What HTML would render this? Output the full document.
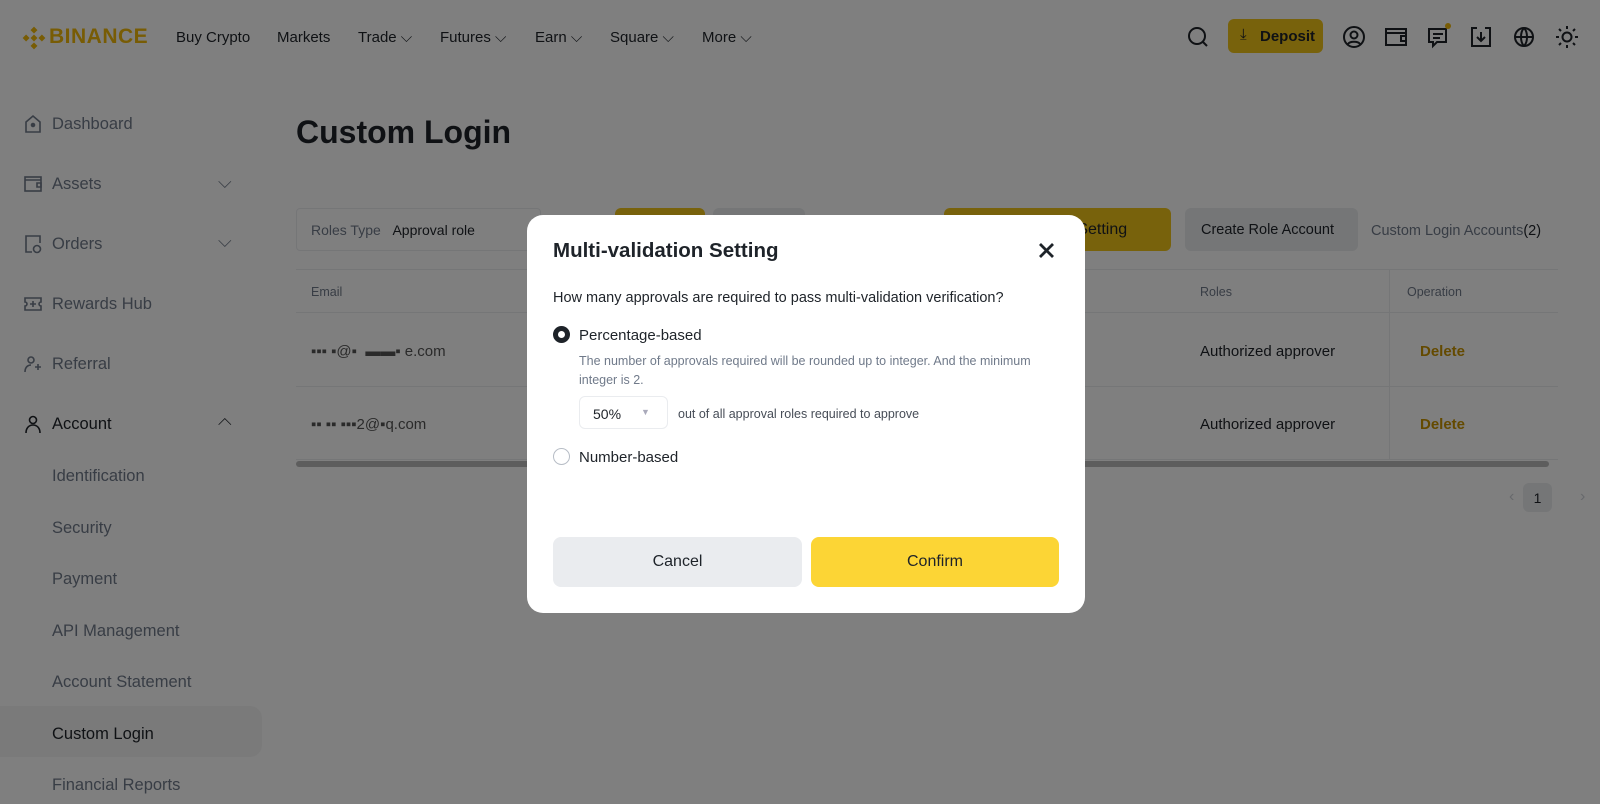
<!DOCTYPE html>
<html><head><meta charset="utf-8">
<style>
*{box-sizing:border-box;margin:0;padding:0}
body{width:1600px;height:804px;overflow:hidden;background:#fff;font-family:"Liberation Sans",sans-serif;color:#1e2329;position:relative}
.a{position:absolute;white-space:nowrap}
.nav{font-size:15px;font-weight:500;color:#1e2329;top:29px}
.side{font-size:16.5px;color:#707a8a;left:52px}
.ico{position:absolute}
.ov{position:absolute;left:0;top:0;width:1600px;height:804px;background:rgba(0,0,0,.5)}
.btn{position:absolute;border-radius:6px}
</style></head><body>
<!-- header -->
<svg class="ico" style="left:21px;top:25px" width="26" height="26" viewBox="0 0 24 24" fill="#f0b90b"><path d="M12 1.5l3.2 3.2-3.2 3.2-3.2-3.2zM12 16.1l3.2 3.2-3.2 3.2-3.2-3.2zM4.7 8.8l3.2 3.2-3.2 3.2L1.5 12zM19.3 8.8l3.2 3.2-3.2 3.2-3.2-3.2zM12 8.8l3.2 3.2-3.2 3.2-3.2-3.2z"/></svg>
<div class="a" style="left:49px;top:25px;font-size:21px;font-weight:700;color:#f0b90b;letter-spacing:.5px">BINANCE</div>
<div class="a nav" style="left:176px">Buy Crypto</div>
<div class="a nav" style="left:277px">Markets</div>
<div class="a nav" style="left:358px">Trade ⌵</div>
<div class="a nav" style="left:440px">Futures ⌵</div>
<div class="a nav" style="left:535px">Earn ⌵</div>
<div class="a nav" style="left:610px">Square ⌵</div>
<div class="a nav" style="left:702px">More ⌵</div>
<svg class="ico" style="left:1186px;top:25px" width="24" height="24" viewBox="0 0 24 24" fill="none" stroke="#1e2329" stroke-width="2"><circle cx="11" cy="11" r="8"/><path d="M17 17l4 4"/></svg>
<div class="btn" style="left:1228px;top:19px;width:95px;height:34px;background:#f0c419;font-size:15px;font-weight:600;padding:9px 0 0 32px">Deposit</div>
<div class="a" style="left:1240px;top:26px;font-size:15px">⤓</div>
<svg class="ico" style="left:1342px;top:25px" width="24" height="24" viewBox="0 0 24 24" fill="none" stroke="#1e2329" stroke-width="2"><circle cx="12" cy="12" r="10"/><circle cx="12" cy="10" r="3.5"/><path d="M6 19c2-3 10-3 12 0"/></svg>
<svg class="ico" style="left:1384px;top:25px" width="24" height="24" viewBox="0 0 24 24" fill="none" stroke="#1e2329" stroke-width="2"><rect x="2" y="4" width="20" height="16"/><path d="M2 8h20M17 11h5v5h-5z"/></svg>
<svg class="ico" style="left:1426px;top:25px" width="24" height="24" viewBox="0 0 24 24" fill="none" stroke="#1e2329" stroke-width="2"><path d="M3 4h17v13H11l-4 4v-4H3z"/><path d="M7 9h10M7 13h7"/></svg>
<div class="a" style="left:1445px;top:23px;width:6px;height:6px;border-radius:50%;background:#f0b90b"></div>
<svg class="ico" style="left:1469px;top:25px" width="24" height="24" viewBox="0 0 24 24" fill="none" stroke="#1e2329" stroke-width="2"><path d="M8 3H3v18h18V3h-5M12 7v9M8 12l4 4 4-4"/></svg>
<svg class="ico" style="left:1512px;top:25px" width="24" height="24" viewBox="0 0 24 24" fill="none" stroke="#1e2329" stroke-width="2"><circle cx="12" cy="12" r="9"/><path d="M3 12h18M12 3c-4 4-4 14 0 18M12 3c4 4 4 14 0 18"/></svg>
<svg class="ico" style="left:1555px;top:25px" width="24" height="24" viewBox="0 0 24 24" fill="none" stroke="#1e2329" stroke-width="2"><circle cx="12" cy="12" r="4.5"/><path d="M12 1v3M12 20v3M1 12h3M20 12h3M4 4l2 2M18 18l2 2M4 20l2-2M18 6l2-2"/></svg>

<!-- sidebar -->
<svg class="ico" style="left:23px;top:114px" width="20" height="20" viewBox="0 0 20 20" fill="none" stroke="#707a8a" stroke-width="1.6"><path d="M3 8l7-6 7 6v10H3z"/><circle cx="10" cy="11" r="1.5" fill="#707a8a"/></svg>
<div class="a side" style="top:115px">Dashboard</div>
<svg class="ico" style="left:23px;top:174px" width="20" height="20" viewBox="0 0 20 20" fill="none" stroke="#707a8a" stroke-width="1.6"><rect x="2" y="3" width="16" height="14"/><path d="M2 6h16M14 9h4v4h-4z"/></svg>
<div class="a side" style="top:175px">Assets</div>
<div class="a" style="left:218px;top:172px;font-size:18px;color:#707a8a">⌵</div>
<svg class="ico" style="left:23px;top:234px" width="20" height="20" viewBox="0 0 20 20" fill="none" stroke="#707a8a" stroke-width="1.6"><path d="M9 18H3V2h14v7"/><circle cx="14" cy="15" r="3.5"/></svg>
<div class="a side" style="top:235px">Orders</div>
<div class="a" style="left:218px;top:231px;font-size:18px;color:#707a8a">⌵</div>
<svg class="ico" style="left:23px;top:294px" width="20" height="20" viewBox="0 0 20 20" fill="none" stroke="#707a8a" stroke-width="1.6"><path d="M2 4h16v4a2 2 0 000 4v4H2v-4a2 2 0 000-4z"/><path d="M10 7v6M7 10h6"/></svg>
<div class="a side" style="top:295px">Rewards Hub</div>
<svg class="ico" style="left:23px;top:354px" width="20" height="20" viewBox="0 0 20 20" fill="none" stroke="#707a8a" stroke-width="1.6"><circle cx="8" cy="6" r="3"/><path d="M2 18c0-5 3-7 6-7M15 10v6M12 13h6"/></svg>
<div class="a side" style="top:355px">Referral</div>
<svg class="ico" style="left:23px;top:414px" width="20" height="20" viewBox="0 0 20 20" fill="none" stroke="#1e2329" stroke-width="1.6"><circle cx="10" cy="6" r="3.5"/><path d="M3 19c0-5 3-8 7-8s7 3 7 8"/></svg>
<div class="a side" style="top:415px;color:#1e2329">Account</div>
<div class="a" style="left:218px;top:413px;font-size:18px;color:#1e2329;transform:rotate(180deg)">⌵</div>
<div class="a side" style="top:467px">Identification</div>
<div class="a side" style="top:519px">Security</div>
<div class="a side" style="top:570px">Payment</div>
<div class="a side" style="top:622px">API Management</div>
<div class="a side" style="top:673px">Account Statement</div>
<div class="a" style="left:0;top:706px;width:262px;height:51px;background:#f5f5f5;border-radius:0 12px 12px 0"></div>
<div class="a side" style="top:725px;color:#1e2329">Custom Login</div>
<div class="a side" style="top:776px">Financial Reports</div>

<!-- main -->
<div class="a" style="left:296px;top:114px;font-size:32px;font-weight:600">Custom Login</div>
<div class="a" style="left:296px;top:208px;width:245px;height:43px;border:1px solid #eaecef;border-radius:4px;font-size:14px;padding:13px 0 0 14px"><span style="color:#707a8a">Roles Type</span>&nbsp;&nbsp;&nbsp;Approval role</div>
<div class="btn" style="left:615px;top:208px;width:90px;height:43px;background:#f0c419"></div>
<div class="btn" style="left:713px;top:208px;width:92px;height:43px;background:#eaecef"></div>
<div class="btn" style="left:944px;top:208px;width:227px;height:43px;background:#f0c419;font-size:16px;font-weight:500;padding:13px 0 0 120px">n Setting</div>
<div class="btn" style="left:1185px;top:208px;width:173px;height:43px;background:#eaecef;font-size:14.5px;font-weight:500;padding:14px 0 0 16px">Create Role Account</div>
<div class="a" style="left:1371px;top:223px;font-size:14.5px;color:#707a8a">Custom Login Accounts<span style="color:#1e2329">(2)</span></div>
<div class="a" style="left:296px;top:269px;width:1262px;height:1px;background:#eaecef"></div>
<div class="a" style="left:296px;top:312px;width:1262px;height:1px;background:#eaecef"></div>
<div class="a" style="left:296px;top:386px;width:1262px;height:1px;background:#eaecef"></div>
<div class="a" style="left:296px;top:459px;width:1262px;height:1px;background:#eaecef"></div>
<div class="a" style="left:1389px;top:269px;width:1px;height:190px;background:#eaecef"></div>
<div class="a" style="left:311px;top:285px;font-size:12.5px;color:#707a8a">Email</div>
<div class="a" style="left:1200px;top:285px;font-size:12.5px;color:#707a8a">Roles</div>
<div class="a" style="left:1407px;top:285px;font-size:12.5px;color:#707a8a">Operation</div>
<div class="a" style="left:311px;top:343px;font-size:15px;color:#555">▪▪▪ ▪@▪ &nbsp;▬▬▪ e.com</div>
<div class="a" style="left:311px;top:416px;font-size:15px;color:#555">▪▪ ▪▪ ▪▪▪2@▪q.com</div>
<div class="a" style="left:1200px;top:343px;font-size:15px">Authorized approver</div>
<div class="a" style="left:1200px;top:416px;font-size:15px">Authorized approver</div>
<div class="a" style="left:1420px;top:343px;font-size:15px;font-weight:600;color:#c99400">Delete</div>
<div class="a" style="left:1420px;top:416px;font-size:15px;font-weight:600;color:#c99400">Delete</div>
<div class="a" style="left:296px;top:461px;width:1253px;height:6px;border-radius:3px;background:#bbb"></div>
<div class="a" style="left:1509px;top:488px;font-size:16px;color:#cfd3d8">‹</div>
<div class="btn" style="left:1523px;top:483px;width:29px;height:29px;background:#eaecef;font-size:14px;text-align:center;padding-top:7px">1</div>
<div class="a" style="left:1580px;top:488px;font-size:16px;color:#cfd3d8">›</div>

<div class="ov"></div>

<!-- modal -->
<div class="a" style="left:527px;top:215px;width:558px;height:398px;background:#fff;border-radius:16px"></div>
<div class="a" style="left:553px;top:239px;font-size:20.5px;font-weight:600">Multi-validation Setting</div>
<svg class="ico" style="left:1038px;top:242px" width="17" height="17" viewBox="0 0 17 17" stroke="#1e2329" stroke-width="2.8"><path d="M2 2l13 13M15 2L2 15"/></svg>
<div class="a" style="left:553px;top:290px;font-size:14.5px">How many approvals are required to pass multi-validation verification?</div>
<div class="a" style="left:553px;top:326px;width:17px;height:17px;border-radius:50%;border:5px solid #1e2329"></div>
<div class="a" style="left:579px;top:327px;font-size:15px">Percentage-based</div>
<div class="a" style="left:579px;top:352px;font-size:12.5px;color:#707a8a;line-height:18.5px;white-space:normal;width:480px">The number of approvals required will be rounded up to integer. And the minimum integer is 2.</div>
<div class="a" style="left:579px;top:396px;width:89px;height:33px;border:1px solid #eaecef;border-radius:6px;font-size:14px;font-weight:500;padding:9px 0 0 13px">50%</div>
<div class="a" style="left:641px;top:407px;font-size:9px;color:#aab">▼</div>
<div class="a" style="left:678px;top:407px;font-size:12.5px;color:#474d57">out of all approval roles required to approve</div>
<div class="a" style="left:553px;top:448px;width:17px;height:17px;border-radius:50%;border:1px solid #b7bdc6"></div>
<div class="a" style="left:579px;top:449px;font-size:15px">Number-based</div>
<div class="btn" style="left:553px;top:537px;width:249px;height:50px;background:#eaecef;border-radius:8px;font-size:16px;font-weight:500;text-align:center;padding-top:16px">Cancel</div>
<div class="btn" style="left:811px;top:537px;width:248px;height:50px;background:#fcd535;border-radius:8px;font-size:16px;font-weight:500;text-align:center;padding-top:16px">Confirm</div>
</body></html>
